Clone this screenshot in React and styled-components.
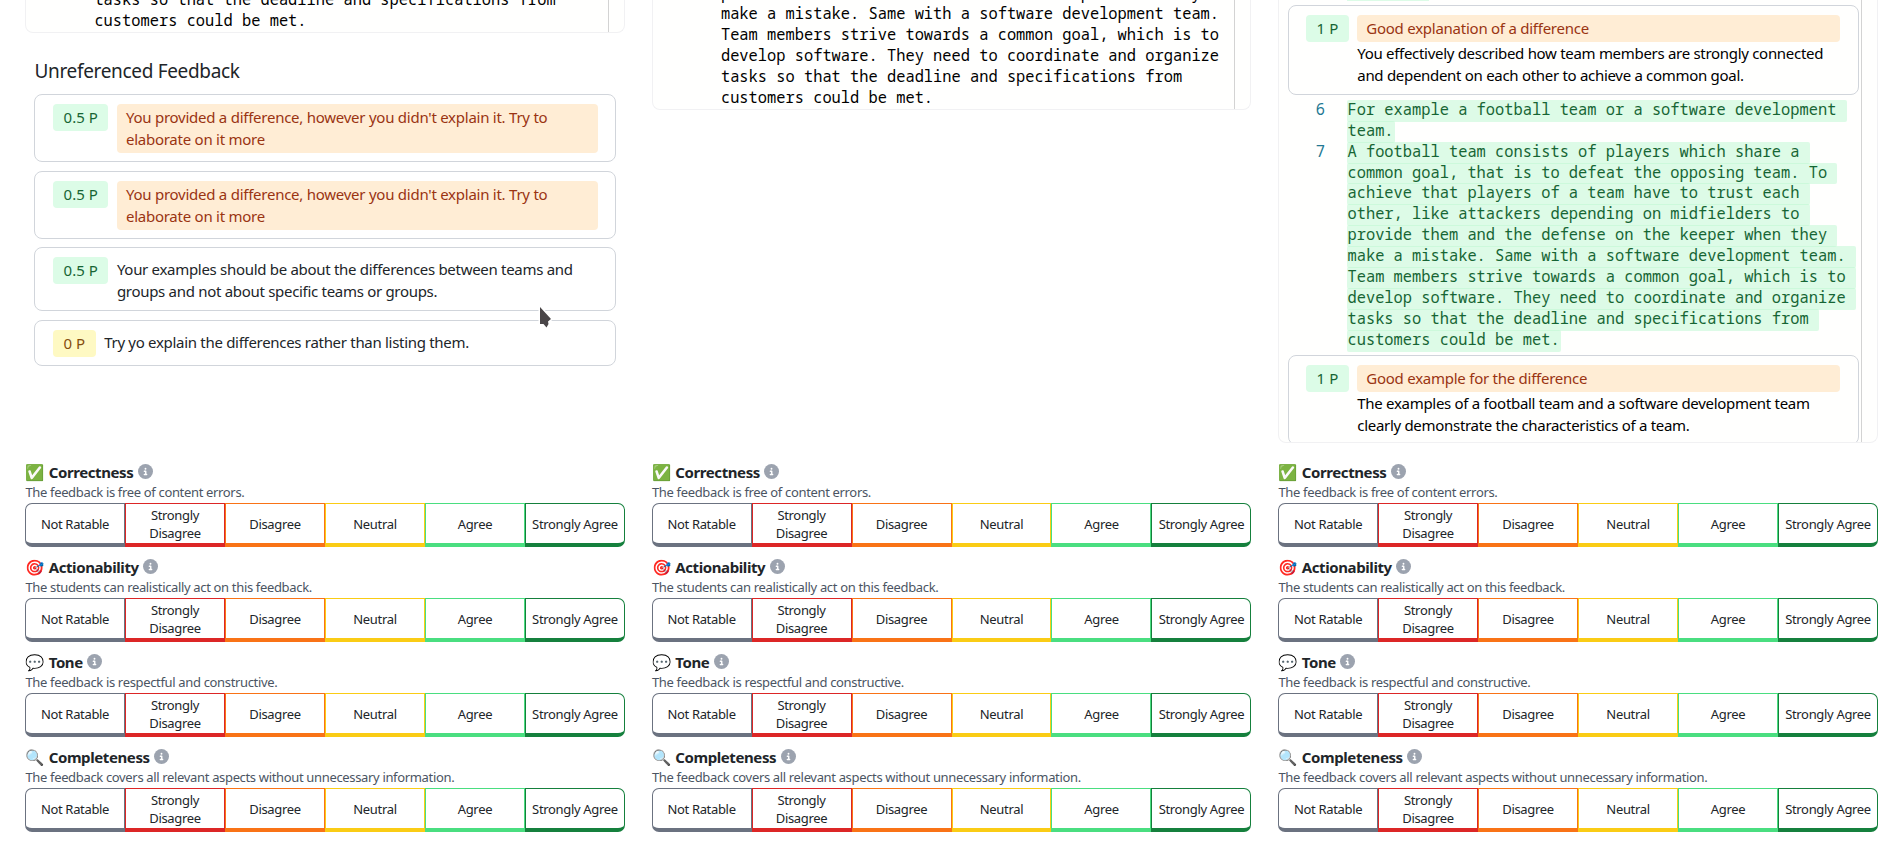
import React from "react";
import styled, { createGlobalStyle, css } from "styled-components";

const GlobalStyle = createGlobalStyle`
  * { box-sizing: border-box; }
  body {
    margin: 0;
    background: #fff;
    color: #212529;
    font-family: "Noto Sans", "Open Sans", sans-serif;
    font-size: 15px;
    letter-spacing: -0.25px;
  }
`;

const Page = styled.main`
  display: grid;
  grid-template-columns: repeat(3, minmax(0, 1fr));
  column-gap: 26.6px;
  height: 847px;
  padding: 0 25px;
  overflow: hidden;
`;

const Column = styled.section`
  display: grid;
  grid-template-rows: 460px auto;
  align-content: start;
`;

const Upper = styled.div`
  min-height: 0;
  overflow: hidden;
`;

const Panel = styled.div`
  display: flex;
  height: ${(p) => p.$height}px;
  padding-right: 15.3px;
  align-items: ${(p) => (p.$fromTop ? "flex-start" : "flex-end")};
  background: #fffffe;
  border: 1px solid #f1f1f3;
  border-top: 0;
  border-radius: 0 0 8px 8px;
  overflow: hidden;
`;

const Editor = styled.div`
  flex: 1;
  min-height: 100%;
  border-right: 1px solid #d3d3d3;
`;

const CodeLine = styled.div`
  display: grid;
  grid-template-columns: 46px 1fr;
  column-gap: 22.4px;
  height: 20.92px;
  font-family: "Noto Sans Mono", "DejaVu Sans Mono", monospace;
  font-size: 15.38px;
  line-height: 20.92px;
  letter-spacing: 0;
  color: #000;
  white-space: pre;
`;

const LineNumber = styled.span`
  text-align: right;
  color: #237893;
`;

const Mark = styled.span`
  justify-self: start;
  height: 21.9px;
  padding-right: 1px;
  border-radius: 2px;
  background: rgba(187, 247, 208, 0.5);
  color: #166534;
`;

const MarkEnd = styled.div`
  width: 82px;
  height: 1px;
  margin: 0 0 4px 68.3px;
  background: #dcfce7;
`;

const CodeBlock = styled.div`
  padding: ${(p) => p.$pad || "0"};
`;

const Heading = styled.h2`
  margin: 26px 0 11px 9.5px;
  font-size: 19px;
  font-weight: 400;
  line-height: 24px;
  letter-spacing: -0.33px;
`;

const FeedbackList = styled.div`
  display: flex;
  flex-direction: column;
  gap: 8.7px;
  margin: 0 9px;
`;

const Card = styled.article`
  display: flex;
  align-items: flex-start;
  gap: 8.5px;
  padding: 9px 17px 8px 18px;
  border: 1px solid #d1d5db;
  border-radius: 8px;
  line-height: 22px;
  ${(p) =>
    p.$inline &&
    css`
      height: 90px;
      flex: none;
      margin: 0 1.5px 0 9px;
      padding: 9px 18px 9px 17px;
      color: #000;
    `}
`;

const Points = styled.span`
  flex: none;
  padding: 2px 10.5px 3px;
  border-radius: 4px;
  line-height: 22px;
  letter-spacing: 0.05px;
  ${(p) =>
    p.$zero
      ? "background: #fef9c3; color: #854d0e;"
      : "background: #dcfce7; color: #166534;"}
`;

const CardBody = styled.div`
  flex: 1;
  min-width: 0;
`;

const Title = styled.div`
  padding: 2px 9px 3px;
  border-radius: 4px;
  background: #ffedd5;
  color: #9a3412;
`;

const Text = styled.p`
  margin: 0;
  padding: ${(p) => (p.$plain ? "0.6px 0 0.4px" : "0")};
  letter-spacing: -0.3px;
`;

const Ratings = styled.div`
  display: flex;
  flex-direction: column;
`;

const Criterion = styled.div`
  height: 95.1px;
`;

const CriterionTitle = styled.div`
  display: flex;
  align-items: center;
  gap: 4.5px;
  height: 24px;
  padding-bottom: 1px;
  color: #212529;
  font-weight: 700;
  letter-spacing: -0.4px;
`;

const Emoji = styled.span`
  width: 19.2px;
  font-size: 15.5px;
  letter-spacing: 0;
`;

const Hint = styled.p`
  margin: 0;
  padding-left: 0.4px;
  height: 19px;
  color: #4b5563;
  font-size: 13px;
  line-height: 17px;
  letter-spacing: -0.34px;
`;

const Scale = styled.div`
  display: grid;
  grid-template-columns: repeat(6, 1fr);
  height: 44px;
`;

const Option = styled.button`
  display: flex;
  align-items: center;
  justify-content: center;
  padding: 2px 4px 0;
  border: 1px solid ${(p) => p.$color};
  border-bottom-width: 4px;
  background: #fff;
  color: #212529;
  font: 13px/17.3px "Noto Sans", "Open Sans", sans-serif;
  letter-spacing: -0.33px;
  white-space: pre-line;
  text-align: center;
  &:first-child { border-radius: 7px 0 0 7px; }
  &:last-child { border-radius: 0 7px 7px 0; }
`;

const InfoSvg = styled.svg`
  width: 15px;
  height: 15px;
  display: block;
`;

const Pointer = styled.svg`
  position: absolute;
  left: 537px;
  top: 304px;
  width: 18px;
  height: 26px;
`;

function InfoIcon() {
  return (
    <InfoSvg viewBox="0 0 512 512">
      <circle cx="256" cy="256" r="256" fill="#9ca3af" />
      <path
        fill="#fff"
        d="M216 336h24v-64h-24c-13.300 0-24-10.700-24-24s10.700-24 24-24h48c13.300 0 24 10.700 24 24v88h8c13.300 0 24 10.700 24 24s-10.700 24-24 24h-80c-13.300 0-24-10.700-24-24s10.700-24 24-24zm40-208a32 32 0 1 1 0 64 32 32 0 1 1 0-64z"
      />
    </InfoSvg>
  );
}

const OPTIONS = [
  ["Not Ratable", "#6b7280"],
  ["Strongly\nDisagree", "#dc2626"],
  ["Disagree", "#f97316"],
  ["Neutral", "#facc15"],
  ["Agree", "#4ade80"],
  ["Strongly Agree", "#15803d"],
];

const CRITERIA = [
  ["✅", "Correctness", "The feedback is free of content errors."],
  ["🎯", "Actionability", "The students can realistically act on this feedback."],
  ["💬", "Tone", "The feedback is respectful and constructive."],
  ["🔍", "Completeness", "The feedback covers all relevant aspects without unnecessary information."],
];

const ESSAY = [
  "A football team consists of players which share a ",
  "common goal, that is to defeat the opposing team. To ",
  "achieve that players of a team have to trust each ",
  "other, like attackers depending on midfielders to ",
  "provide them and the defense on the keeper when they ",
  "make a mistake. Same with a software development team. ",
  "Team members strive towards a common goal, which is to ",
  "develop software. They need to coordinate and organize ",
  "tasks so that the deadline and specifications from ",
  "customers could be met.",
];

function RatingForm() {
  return (
    <Ratings>
      {CRITERIA.map(([emoji, name, hint]) => (
        <Criterion key={name}>
          <CriterionTitle>
            <Emoji>{emoji}</Emoji>
            <span>{name}</span>
            <InfoIcon />
          </CriterionTitle>
          <Hint>{hint}</Hint>
          <Scale>
            {OPTIONS.map(([label, color]) => (
              <Option key={label} $color={color}>{label}</Option>
            ))}
          </Scale>
        </Criterion>
      ))}
    </Ratings>
  );
}

function Lines({ lines, numbers = {}, marked, pad }) {
  return (
    <CodeBlock $pad={pad}>
      {lines.map((line, i) => (
        <CodeLine key={line}>
          <LineNumber>{numbers[i]}</LineNumber>
          {marked ? <Mark>{line}</Mark> : <span>{line}</span>}
        </CodeLine>
      ))}
    </CodeBlock>
  );
}

function Feedback({ points, title, text, inline }) {
  return (
    <Card $inline={inline}>
      <Points $zero={points === "0"}>{points} P</Points>
      <CardBody>
        {title && <Title>{title}</Title>}
        {text && <Text $plain={!title}>{text}</Text>}
      </CardBody>
    </Card>
  );
}

export default function App() {
  const repeated = "You provided a difference, however you didn't explain it. Try to elaborate on it more";
  return (
    <>
      <GlobalStyle />
      <Page>
        <Column>
          <Upper>
            <Panel $height={33}>
              <Editor><Lines lines={ESSAY.slice(-2)} /></Editor>
            </Panel>
            <Heading>Unreferenced Feedback</Heading>
            <FeedbackList>
              <Feedback points="0.5" title={repeated} />
              <Feedback points="0.5" title={repeated} />
              <Feedback
                points="0.5"
                text="Your examples should be about the differences between teams and groups and not about specific teams or groups."
              />
              <Feedback points="0" text="Try yo explain the differences rather than listing them." />
            </FeedbackList>
          </Upper>
          <RatingForm />
        </Column>
        <Column>
          <Upper>
            <Panel $height={110}>
              <Editor><Lines lines={ESSAY.slice(-6)} /></Editor>
            </Panel>
          </Upper>
          <RatingForm />
        </Column>
        <Column>
          <Upper>
            <Panel $height={443} $fromTop>
              <Editor>
                <MarkEnd />
                <Feedback
                  inline
                  points="1"
                  title="Good explanation of a difference"
                  text="You effectively described how team members are strongly connected and dependent on each other to achieve a common goal."
                />
                <Lines
                  marked
                  pad="4.8px 0 4.2px"
                  numbers={{ 0: 6, 2: 7 }}
                  lines={["For example a football team or a software development ", "team.", ...ESSAY]}
                />
                <Feedback
                  inline
                  points="1"
                  title="Good example for the difference"
                  text="The examples of a football team and a software development team clearly demonstrate the characteristics of a team."
                />
              </Editor>
            </Panel>
          </Upper>
          <RatingForm />
        </Column>
      </Page>
      <Pointer viewBox="0 0 18 26">
        <path d="M3 3v17h3.500l3 3.500 2-3.500-.5-2.500 3-2.500z" fill="#4a4648" stroke="#fff" strokeWidth="3" strokeLinejoin="round" paintOrder="stroke" />
      </Pointer>
    </>
  );
}
